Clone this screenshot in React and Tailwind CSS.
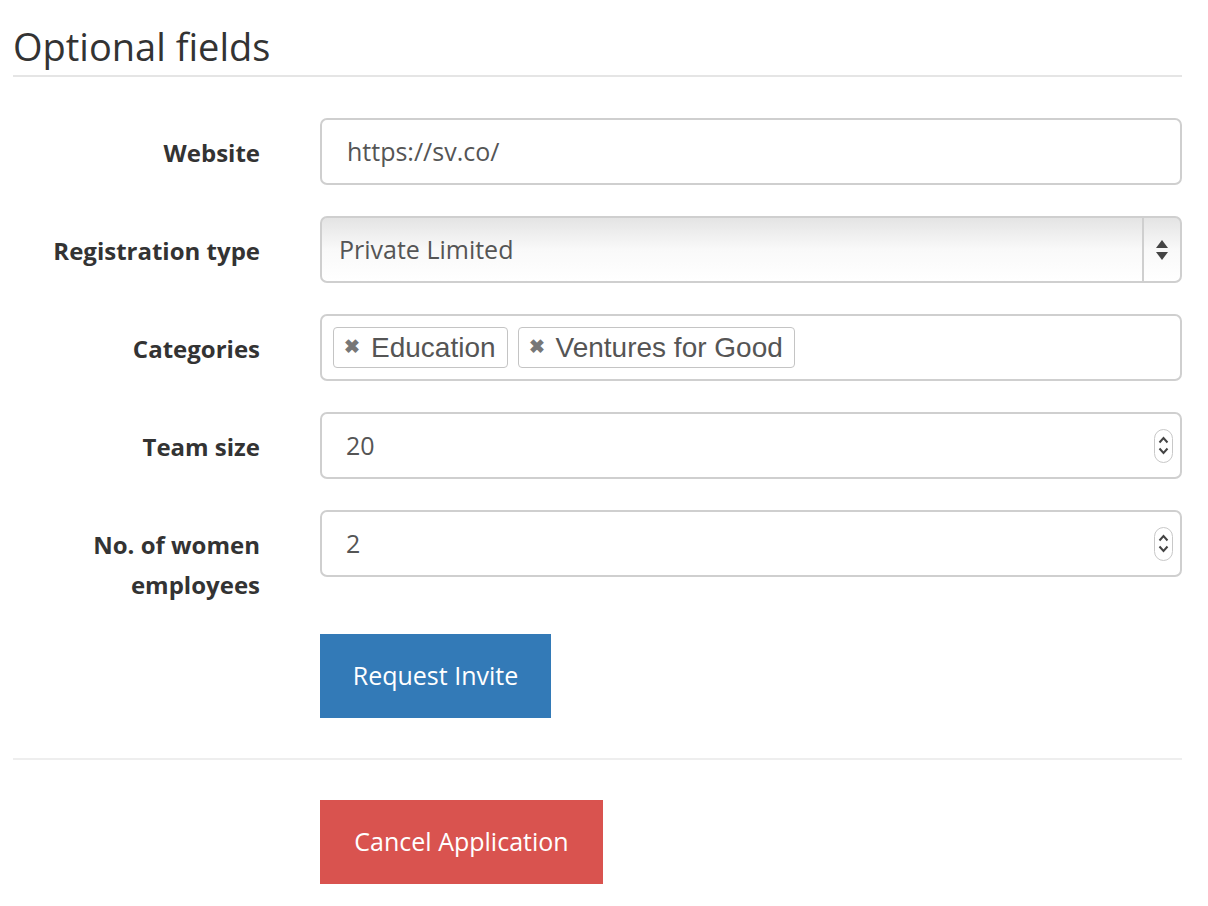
const LABEL = "w-[247px] shrink-0 text-right font-bold text-[24px] leading-[40px] text-[#333]";

function Spinner() {
  return (
    <div className="w-[19px] h-[34px] rounded-full border border-[#c8c8c8] bg-white flex flex-col items-center justify-center gap-[3px]">
      <svg width="11" height="8" viewBox="0 0 11 8"><path d="M1.5 6.5 L5.5 2 L9.5 6.5" fill="none" stroke="#444" strokeWidth="2" /></svg>
      <svg width="11" height="8" viewBox="0 0 11 8"><path d="M1.5 1.5 L5.5 6 L9.5 1.5" fill="none" stroke="#444" strokeWidth="2" /></svg>
    </div>
  );
}

function Row({ label, children }) {
  return (
    <div className="flex items-start">
      <div className={LABEL + " pt-[15px]"}>{label}</div>
      <div className="ml-[60px] flex-1">{children}</div>
    </div>
  );
}

function Tag({ text }) {
  return (
    <div className="h-[41px] pl-[10px] pr-[11px] flex items-center gap-[11px] border border-[#c4c4c4] rounded-[4px] text-[28px] text-[#555] font-['Liberation_Sans',Arial,sans-serif]">
      <span className="text-[#777] text-[19px] font-bold">✖</span>
      <span>{text}</span>
    </div>
  );
}

export default function App() {
  return (
    <div className="w-[1208px] h-[906px] bg-white font-['Open_Sans',sans-serif] text-[#333] pl-[13px] pr-[26px]">
      <h2 className="pt-[20px] text-[38px] leading-[52px] text-[#333] font-normal">Optional fields</h2>
      <div className="mt-[3px] h-[2px] bg-[#e5e5e5]" />

      <div className="mt-[41px] flex flex-col gap-[31px]">
        <Row label="Website">
          <div className="h-[67px] border-2 border-[#cfcfcf] rounded-[7px] flex items-center pl-[25px] text-[25px] text-[#555]">
            https://sv.co/
          </div>
        </Row>
        <Row label="Registration type">
          <div className="h-[67px] border-2 border-[#cfcfcf] rounded-[7px] flex items-stretch overflow-hidden bg-gradient-to-b from-[#e4e4e4] via-[#f9f9f9] to-[#ffffff]">
            <div className="flex-1 flex items-center pl-[17px] text-[25px] text-[#555]">Private Limited</div>
            <div className="w-[38px] border-l-2 border-[#cfcfcf] flex items-center justify-center">
              <svg width="14" height="24" viewBox="0 0 14 24">
                <path d="M7 2 L13 10 L1 10 Z" fill="#444" />
                <path d="M1 14 L13 14 L7 22 Z" fill="#444" />
              </svg>
            </div>
          </div>
        </Row>
        <Row label="Categories">
          <div className="h-[67px] border-2 border-[#cfcfcf] rounded-[7px] flex items-center gap-[10px] pl-[11px]">
            <Tag text="Education" />
            <Tag text="Ventures for Good" />
          </div>
        </Row>
        <Row label="Team size">
          <div className="h-[67px] border-2 border-[#cfcfcf] rounded-[7px] flex items-center justify-between pl-[24px] pr-[7px] text-[25px] text-[#555]">
            <span>20</span>
            <Spinner />
          </div>
        </Row>
        <Row label={<span>No. of women<br />employees</span>}>
          <div className="h-[67px] border-2 border-[#cfcfcf] rounded-[7px] flex items-center justify-between pl-[24px] pr-[7px] text-[25px] text-[#555]">
            <span>2</span>
            <Spinner />
          </div>
        </Row>
      </div>

      <div className="mt-[29px] pl-[307px]">
        <button className="w-[231px] h-[84px] bg-[#337ab7] text-white text-[25px]">Request Invite</button>
      </div>
      <div className="mt-[40px] h-[2px] bg-[#eeeeee]" />
      <div className="mt-[40px] pl-[307px]">
        <button className="w-[283px] h-[84px] bg-[#d9534f] text-white text-[25px]">Cancel Application</button>
      </div>
    </div>
  );
}
